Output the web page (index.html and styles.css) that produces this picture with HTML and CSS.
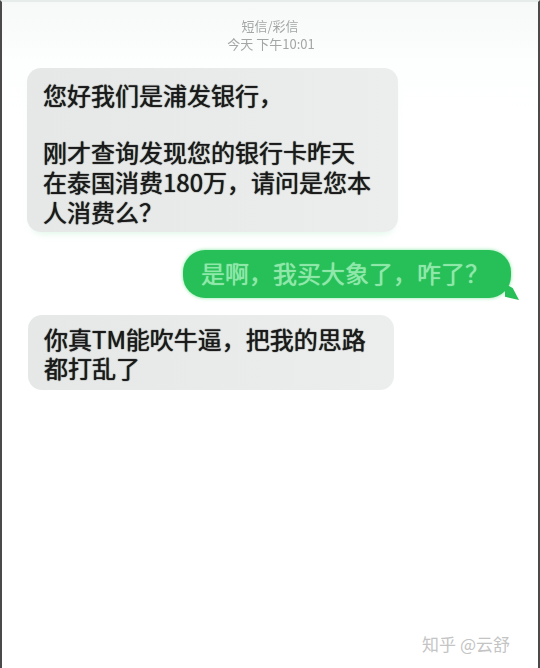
FILE: index.html
```html
<!DOCTYPE html>
<html lang="zh-CN">
<head>
<meta charset="utf-8">
<title>短信</title>
<link rel="stylesheet" href="styles.css">
</head>
<body>
<div class="screen">
  <header class="meta">
    <div class="meta-type">短信/彩信</div>
    <div class="meta-time">今天 下午10:01</div>
  </header>
  <div class="thread">
    <div class="bubble in first">
      <p class="para">您好我们是浦发银行，</p>
      <p class="para">刚才查询发现您的银行卡昨天<br>在泰国消费180万，请问是您本<br>人消费么？</p>
    </div>
    <div class="bubble out">是啊，我买大象了，咋了？</div>
    <div class="bubble in third">你真TM能吹牛逼，把我的思路<br>都打乱了</div>
  </div>
  <footer class="mark">知乎 @云舒</footer>
</div>
</body>
</html>
```
FILE: styles.css
```css
html, body {
  margin: 0;
  padding: 0;
}
body {
  background: #ffffff;
  font-family: "Noto Sans CJK SC", "Noto Sans", sans-serif;
}
.screen {
  box-sizing: border-box;
  width: 540px;
  height: 668px;
  display: flex;
  flex-direction: column;
  border-left: 2px solid #4a4a4a;
  border-right: 2px solid #4a4a4a;
  border-top: 2px solid #e6ecea;
  background: linear-gradient(#f6f9f8 0, #fdfefe 60px, #ffffff 120px);
}
.meta {
  padding-top: 15px;
  text-align: center;
  color: #a2a6a5;
  font-size: 13px;
  line-height: 18px;
  filter: blur(0.5px);
}
.meta-time {
  padding-left: 2px;
}
.thread {
  display: flex;
  flex-direction: column;
  padding: 0 25px 0 25px;
}
.bubble {
  box-sizing: border-box;
  font-size: 24px;
  line-height: 30px;
  border-radius: 14px;
  font-weight: 400;
}
.bubble.in {
  align-self: flex-start;
  background: linear-gradient(90deg, #e6e7e7, #eceded);
  color: #1a1a1a;
  text-shadow: 0 0 1px rgba(0,0,0,0.8), 0 0 1px rgba(0,0,0,0.5);
}
.first {
  margin-top: 15px;
  width: 371px;
  padding: 12px 16px 5px 16px;
  box-shadow: 0 6px 8px -6px rgba(120, 220, 160, 0.35);
}
.para {
  margin: 0;
}
.para + .para {
  margin-top: 27px;
}
.bubble.out {
  position: relative;
  align-self: flex-end;
  margin-top: 18px;
  margin-right: 2px;
  width: 328px;
  height: 48px;
  padding-left: 18px;
  line-height: 46px;
  border-radius: 22px;
  background: #27bf58;
  color: #8fe8a9;
  text-shadow: 0 0 1px rgba(170, 245, 190, 0.9);
  box-shadow: 0 0 3px 1px rgba(120, 230, 150, 0.55);
}
.bubble.out::after {
  content: "";
  position: absolute;
  right: -8px;
  bottom: -2px;
  width: 14px;
  height: 16px;
  background: #27bf58;
  clip-path: polygon(0 0, 55% 25%, 100% 100%, 0 80%);
}
.third {
  margin-top: 17px;
  margin-left: 1px;
  width: 366px;
  padding: 9px 16px 8px 16px;
  line-height: 29px;
}
.mark {
  margin-top: auto;
  align-self: flex-end;
  padding: 0 28px 13px 0;
  font-size: 17px;
  line-height: 22px;
  color: #c4c4c4;
}
```
